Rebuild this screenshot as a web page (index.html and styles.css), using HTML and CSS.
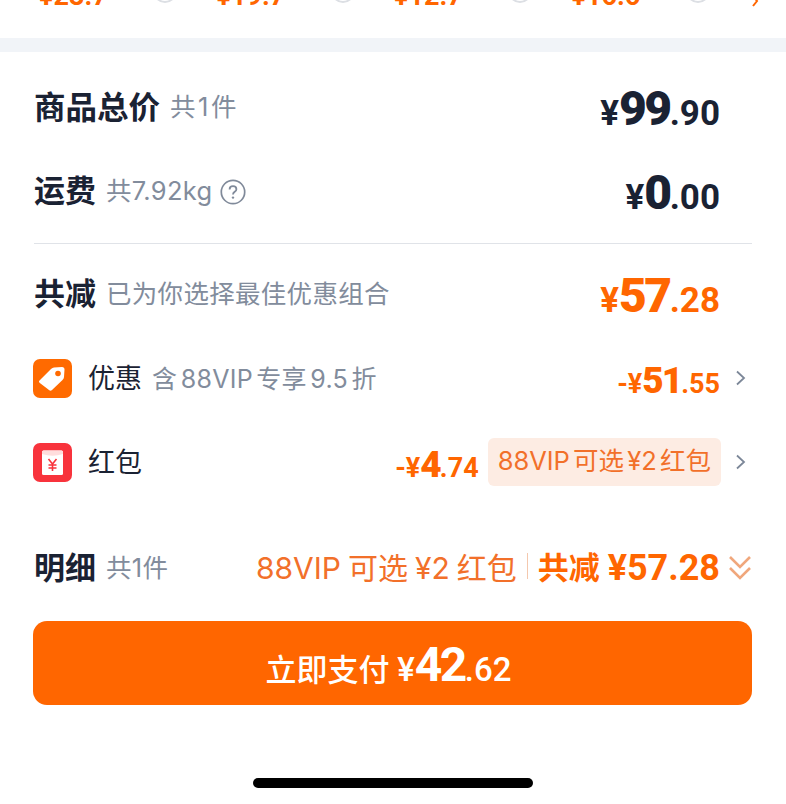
FILE: index.html
```html
<!DOCTYPE html>
<html lang="en">
  <head>
    <meta charset="UTF-8" />
    <meta name="viewport" content="width=device-width, initial-scale=1.0" />
    <title>订单结算</title>
    <link rel="stylesheet" href="styles.css">
  </head>
  <body>
    <div class="options">
      <div class="option"><span class="option-price">¥23.7</span><i class="radio"></i></div>
      <div class="option"><span class="option-price">¥19.7</span><i class="radio"></i></div>
      <div class="option"><span class="option-price">¥12.7</span><i class="radio"></i></div>
      <div class="option"><span class="option-price">¥16.6</span><i class="radio"></i></div>
      <svg class="option-more" width="12" height="8" viewBox="0 0 12 8"><path d="M4 -4 L8 1 L4 6" fill="none" stroke="#ff6600" stroke-width="2"/></svg>
    </div>
    <div class="band"></div>

    <section class="summary">
      <div class="row row-goods">
        <span class="title title-goods">商品总价</span>
        <span class="note note-goods">共1件</span>
        <span class="price dark"><small>¥</small><b>99</b><small>.90</small></span>
      </div>
      <div class="row row-ship">
        <span class="title">运费</span>
        <span class="note">共7.92kg</span>
        <svg class="help" width="26" height="26" viewBox="0 0 26 26">
          <circle cx="13" cy="13" r="11.7" fill="none" stroke="#808a9a" stroke-width="1.7"/>
          <path d="M9.6 10.4c0-2 1.5-3.2 3.4-3.2s3.400 1.200 3.400 3c0 2.600-3.400 2.600-3.400 5.200" fill="none" stroke="#808a9a" stroke-width="1.800"/>
          <circle cx="13" cy="18.600" r="1.200" fill="#808a9a"/>
        </svg>
        <span class="price dark"><small>¥</small><b>0</b><small>.00</small></span>
      </div>
      <div class="divider"></div>
      <div class="row row-cut">
        <span class="title">共减</span>
        <span class="note">已为你选择最佳优惠组合</span>
        <span class="price orange"><small>¥</small><b>57</b><small>.28</small></span>
      </div>
      <div class="row row-item row-coupon">
        <svg class="badge" width="39" height="39" viewBox="0 0 39 39">
          <rect width="39" height="39" rx="7" fill="#ff6a00"/>
          <path d="M6.500 21.500 L18 10 Q19.500 8.500 21 8.500 L29 8 Q31.500 8 31.500 10.500 L31 18 Q31 19.500 29.500 21 L19 31 Q17.500 32.500 16 31 L6.500 23.800 Q5.300 22.600 6.500 21.500 Z" fill="#fff"/>
          <circle cx="25" cy="14.500" r="2.800" fill="#ff6a00"/>
        </svg>
        <span class="item-name">优惠</span>
        <span class="note note-coupon">含 88VIP 专享 9.5 折</span>
        <span class="price-sm orange"><small>-¥</small><b>51</b><small>.55</small></span>
        <svg class="arrow" width="12" height="16" viewBox="0 0 12 16"><path d="M2 1.500 L9 8 L2 14.500" fill="none" stroke="#7c8798" stroke-width="1.800"/></svg>
      </div>
      <div class="row row-item row-packet">
        <svg class="badge" width="39" height="39" viewBox="0 0 39 39">
          <rect width="39" height="39" rx="7" fill="#f8333c"/>
          <rect x="9" y="7.500" width="21" height="24.500" rx="1.500" fill="#fff"/>
          <path d="M9 9 Q9 7.500 10.500 7.500 H28.500 Q30 7.500 30 9 V11 Q19.500 14.500 9 11 Z" fill="#fdd"/>
          <path d="M15.500 16 L19.500 21 L23.500 16 M19.500 21 V28 M15.500 22 H23.500 M15.500 25 H23.500" fill="none" stroke="#f8333c" stroke-width="1.600"/>
        </svg>
        <span class="item-name">红包</span>
        <span class="price-sm orange"><small>-¥</small><b>4</b><small>.74</small></span>
        <span class="tag">88VIP 可选 ¥2 红包</span>
        <svg class="arrow" width="12" height="16" viewBox="0 0 12 16"><path d="M2 1.500 L9 8 L2 14.500" fill="none" stroke="#7c8798" stroke-width="1.800"/></svg>
      </div>
      <div class="row row-detail">
        <span class="title">明细</span>
        <span class="note">共1件</span>
        <span class="detail-tip">88VIP 可选 ¥2 红包</span>
        <i class="detail-sep"></i>
        <span class="detail-total">共减</span>
        <span class="detail-amount">¥57.28</span>
        <svg class="double" width="24" height="28" viewBox="0 0 24 28">
          <path d="M2 3 L12 13 L22 3" fill="none" stroke="#f0a77c" stroke-width="2.600"/>
          <path d="M2 14 L12 24 L22 14" fill="none" stroke="#f0a77c" stroke-width="2.600"/>
        </svg>
      </div>
      <button class="pay">立即支付 <small>¥</small><b>42</b><small>.62</small></button>
    </section>

    <div class="home-bar"></div>
  </body>
</html>
```
FILE: styles.css
```css
* {
  margin: 0;
  padding: 0;
  box-sizing: border-box;
}
body {
  width: 786px;
  height: 804px;
  overflow: hidden;
  background-color: #fff;
  color: #1a2233;
  font-family: "Roboto", "Noto Sans CJK SC", sans-serif;
}

.options {
  display: flex;
  height: 38px;
  overflow: hidden;
  padding-left: 39px;
  align-items: flex-start;
}
.option {
  width: 177.500px;
  flex: none;
  display: flex;
  align-items: flex-start;
  gap: 24px;
  margin-top: -15px;
  height: 22px;
}
.option-price {
  color: #ff6600;
  font-size: 27px;
  font-weight: 700;
  line-height: 22px;
  width: 90px;
}
.radio {
  width: 24px;
  height: 24px;
  margin-top: -6px;
  border: 2px solid #dcdfe4;
  border-radius: 50%;
  flex: none;
}
.option-more {
  flex: none;
}

.band {
  height: 14px;
  background-color: #f1f4f8;
}

.summary {
  padding: 0 34px;
}
.row {
  display: flex;
  align-items: center;
}
.row-goods,
.row-ship {
  height: 84px;
  padding-top: 24px;
  padding-right: 32px;
}
.row-cut {
  height: 98px;
  padding-right: 32px;
}
.row-item {
  padding-right: 5px;
}
.row-coupon {
  height: 72px;
}
.row-packet {
  height: 96px;
}
.row-detail {
  height: 111px;
}

.title {
  margin-bottom: 3px;
  font-size: 31px;
  font-weight: 700;
  color: #1a2233;
}
.title-goods {
  font-size: 31.500px;
}
.note {
  margin-left: 10px;
  margin-bottom: 3px;
  font-family: "Inter", "Noto Sans CJK SC", sans-serif;
  font-size: 25.500px;
  color: #828c9c;
  letter-spacing: 0.300px;
  word-spacing: -3px;
}
.note-goods {
  letter-spacing: 2.500px;
}
.note-coupon {
  font-size: 25px;
  word-spacing: -4px;
}
.help {
  margin-left: 8px;
  margin-top: 3px;
}
.price,
.price-sm {
  margin-left: auto;
  font-weight: 700;
  white-space: nowrap;
}
.price {
  margin-top: 16px;
  line-height: 50px;
}
.price b {
  font-size: 48px;
  letter-spacing: -2.500px;
}
.price small {
  font-size: 35px;
}
.price-sm {
  margin-top: 12px;
  line-height: 40px;
}
.price-sm b {
  font-size: 37px;
  letter-spacing: -2px;
}
.price-sm small {
  font-size: 27px;
}
.dark {
  color: #1a2233;
}
.orange {
  color: #ff6600;
}
.divider {
  height: 1px;
  background-color: #e0e3e8;
  margin-top: 23px;
}

.badge {
  flex: none;
  margin-left: -1px;
}
.item-name {
  margin-left: 16px;
  margin-bottom: 3px;
  font-size: 27px;
  color: #1a2233;
}
.arrow {
  flex: none;
  margin-left: 15px;
}
.tag {
  margin-left: 9px;
  padding: 0 10px;
  height: 48px;
  line-height: 46px;
  border-radius: 6px;
  background-color: #fdece3;
  color: #f2702a;
  font-family: "Inter", "Noto Sans CJK SC", sans-serif;
  font-size: 25.500px;
  word-spacing: -4px;
  white-space: nowrap;
}
.row-packet .arrow {
  margin-left: 14px;
}

.row-detail .title {
  margin-bottom: 0;
}
.row-detail .note {
  margin-bottom: 0;
}
.detail-tip {
  margin-left: auto;
  font-family: "Inter", "Noto Sans CJK SC", sans-serif;
  font-size: 30px;
  color: #f2702a;
  word-spacing: -1.500px;
}
.detail-sep {
  width: 1px;
  height: 26px;
  background-color: #f4c8ae;
  margin: 0 10px;
}
.detail-total {
  font-size: 31px;
  font-weight: 700;
  color: #ff6600;
}
.detail-amount {
  margin-left: 8px;
  margin-top: 4px;
  font-size: 36px;
  font-weight: 700;
  color: #ff6600;
}
.double {
  margin-left: 8px;
  margin-top: 4px;
}

.pay {
  display: block;
  width: 719px;
  height: 84px;
  margin-left: -1px;
  padding-top: 2px;
  padding-right: 8px;
  border: none;
  border-radius: 14px;
  background-color: #ff6600;
  color: #fff;
  font-family: inherit;
  font-size: 31px;
  font-weight: 500;
}
.pay b {
  font-size: 48px;
  font-weight: 700;
  letter-spacing: -2.500px;
}
.pay small {
  font-size: 33px;
}

.home-bar {
  width: 280px;
  height: 10px;
  margin: 73px auto 0;
  border-radius: 5px;
  background-color: #000;
}
```
